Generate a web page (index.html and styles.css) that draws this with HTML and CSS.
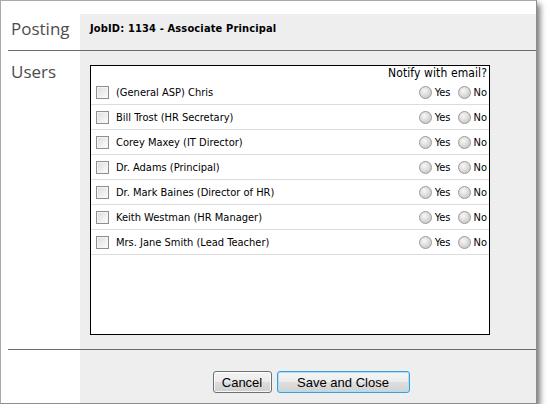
FILE: index.html
```html
<!DOCTYPE html>
<html>
<head>
<meta charset="utf-8">
<link rel="stylesheet" href="styles.css">
</head>
<body>
<div class="window">
  <div class="section sec-posting">
    <div class="label">Posting</div>
    <div class="content job">JobID: 1134 - Associate Principal</div>
  </div>
  <div class="rule"></div>
  <div class="section sec-users">
    <div class="label">Users</div>
    <div class="content users">
      <div class="listbox">
        <div class="notify">Notify with email?</div>
        <div class="row"><span class="cb"></span><span class="name">(General ASP) Chris</span><span class="opts"><span class="rd"></span>Yes<span class="rd no"></span>No</span></div>
        <div class="row"><span class="cb"></span><span class="name">Bill Trost (HR Secretary)</span><span class="opts"><span class="rd"></span>Yes<span class="rd no"></span>No</span></div>
        <div class="row"><span class="cb"></span><span class="name">Corey Maxey (IT Director)</span><span class="opts"><span class="rd"></span>Yes<span class="rd no"></span>No</span></div>
        <div class="row"><span class="cb"></span><span class="name">Dr. Adams (Principal)</span><span class="opts"><span class="rd"></span>Yes<span class="rd no"></span>No</span></div>
        <div class="row"><span class="cb"></span><span class="name">Dr. Mark Baines (Director of HR)</span><span class="opts"><span class="rd"></span>Yes<span class="rd no"></span>No</span></div>
        <div class="row"><span class="cb"></span><span class="name">Keith Westman (HR Manager)</span><span class="opts"><span class="rd"></span>Yes<span class="rd no"></span>No</span></div>
        <div class="row"><span class="cb"></span><span class="name">Mrs. Jane Smith (Lead Teacher)</span><span class="opts"><span class="rd"></span>Yes<span class="rd no"></span>No</span></div>
      </div>
    </div>
  </div>
  <div class="rule"></div>
  <div class="section sec-buttons">
    <div class="label"></div>
    <div class="content buttons">
      <button class="btn cancel">Cancel</button>
      <button class="btn save">Save and Close</button>
    </div>
  </div>
</div>
</body>
</html>
```
FILE: styles.css
```css
html, body {
  margin: 0;
  padding: 0;
  background: #ffffff;
}
.window {
  width: 537px;
  height: 404px;
  border: 1px solid #a9a9a9;
  border-right-color: #8c8c8c;
  border-bottom-color: #8c8c8c;
  box-shadow: 3px 4px 6px rgba(0, 0, 0, 0.55);
  background: #ffffff;
  padding-top: 13px;
  box-sizing: border-box;
  display: flex;
  flex-direction: column;
  font-family: "DejaVu Sans Condensed", "DejaVu Sans", sans-serif;
  font-stretch: condensed;
}
.section {
  display: flex;
}
.label {
  width: 79px;
  flex: none;
  padding-left: 10px;
  box-sizing: border-box;
  font-family: "Open Sans", sans-serif;
  font-stretch: normal;
  font-size: 17px;
  color: #4d4d4d;
  background: #ffffff;
}
.content {
  flex: 1;
  background: #eeeeee;
}
.sec-posting {
  height: 36px;
}
.sec-posting .label {
  padding-top: 3px;
}
.job {
  font-weight: bold;
  font-size: 11px;
  letter-spacing: 0.15px;
  color: #000;
  padding: 8px 0 0 10px;
}
.rule {
  height: 1px;
  margin-left: 7px;
  background: #6b6b6b;
}
.sec-users {
  height: 298px;
}
.sec-users .label {
  padding-top: 9px;
  font-size: 17px;
}
.users {
  padding: 14px 0 0 10px;
}
.listbox {
  width: 400px;
  height: 270px;
  box-sizing: border-box;
  border: 1px solid #000;
  background: #fff;
}
.notify {
  text-align: right;
  font-size: 12px;
  letter-spacing: 0.1px;
  height: 14px;
  line-height: 14px;
  padding-right: 2px;
  color: #000;
}
.row {
  display: flex;
  align-items: center;
  height: 24px;
  border-bottom: 1px solid #dcdcdc;
  font-size: 11px;
  color: #000;
}
.cb {
  width: 11px;
  height: 11px;
  margin-left: 5px;
  margin-right: 7px;
  border: 1px solid #8e8f8f;
  background: linear-gradient(135deg, #dcdcdc 0%, #f0f0f0 60%, #ffffff 100%);
  box-shadow: inset 0 0 0 1px #f4f4f4;
}
.name {
  flex: 1;
  padding-top: 1px;
}
.opts {
  display: flex;
  align-items: center;
  padding-right: 2px;
}
.rd {
  width: 11px;
  height: 11px;
  border-radius: 50%;
  border: 1px solid #9a9a9a;
  background: radial-gradient(circle at 40% 35%, #f8f8f8 0%, #d8d8d8 55%, #bdbdbd 100%);
  margin-right: 3px;
}
.rd.no {
  margin-left: 7px;
}
.sec-buttons {
  flex: 1;
}
.buttons {
  display: flex;
  justify-content: center;
  align-items: flex-start;
  gap: 5px;
  padding: 21px 0 0 6px;
}
.btn {
  height: 22px;
  padding: 0;
  font-family: "Liberation Sans", Arial, sans-serif;
  font-size: 13px;
  color: #000;
  border-radius: 3px;
  border: 1px solid #707070;
  background: linear-gradient(#f4f4f4 0%, #ebebeb 48%, #dddddd 52%, #cfcfcf 100%);
  box-shadow: inset 0 0 0 1px rgba(255,255,255,0.8);
}
.cancel {
  width: 59px;
}
.save {
  width: 133px;
  border-color: #3c9fd8;
  box-shadow: inset 0 0 0 1px #a8e0f7;
  background: linear-gradient(#f6f6f6 0%, #ececec 48%, #dedede 52%, #d2d2d2 100%);
}
```
